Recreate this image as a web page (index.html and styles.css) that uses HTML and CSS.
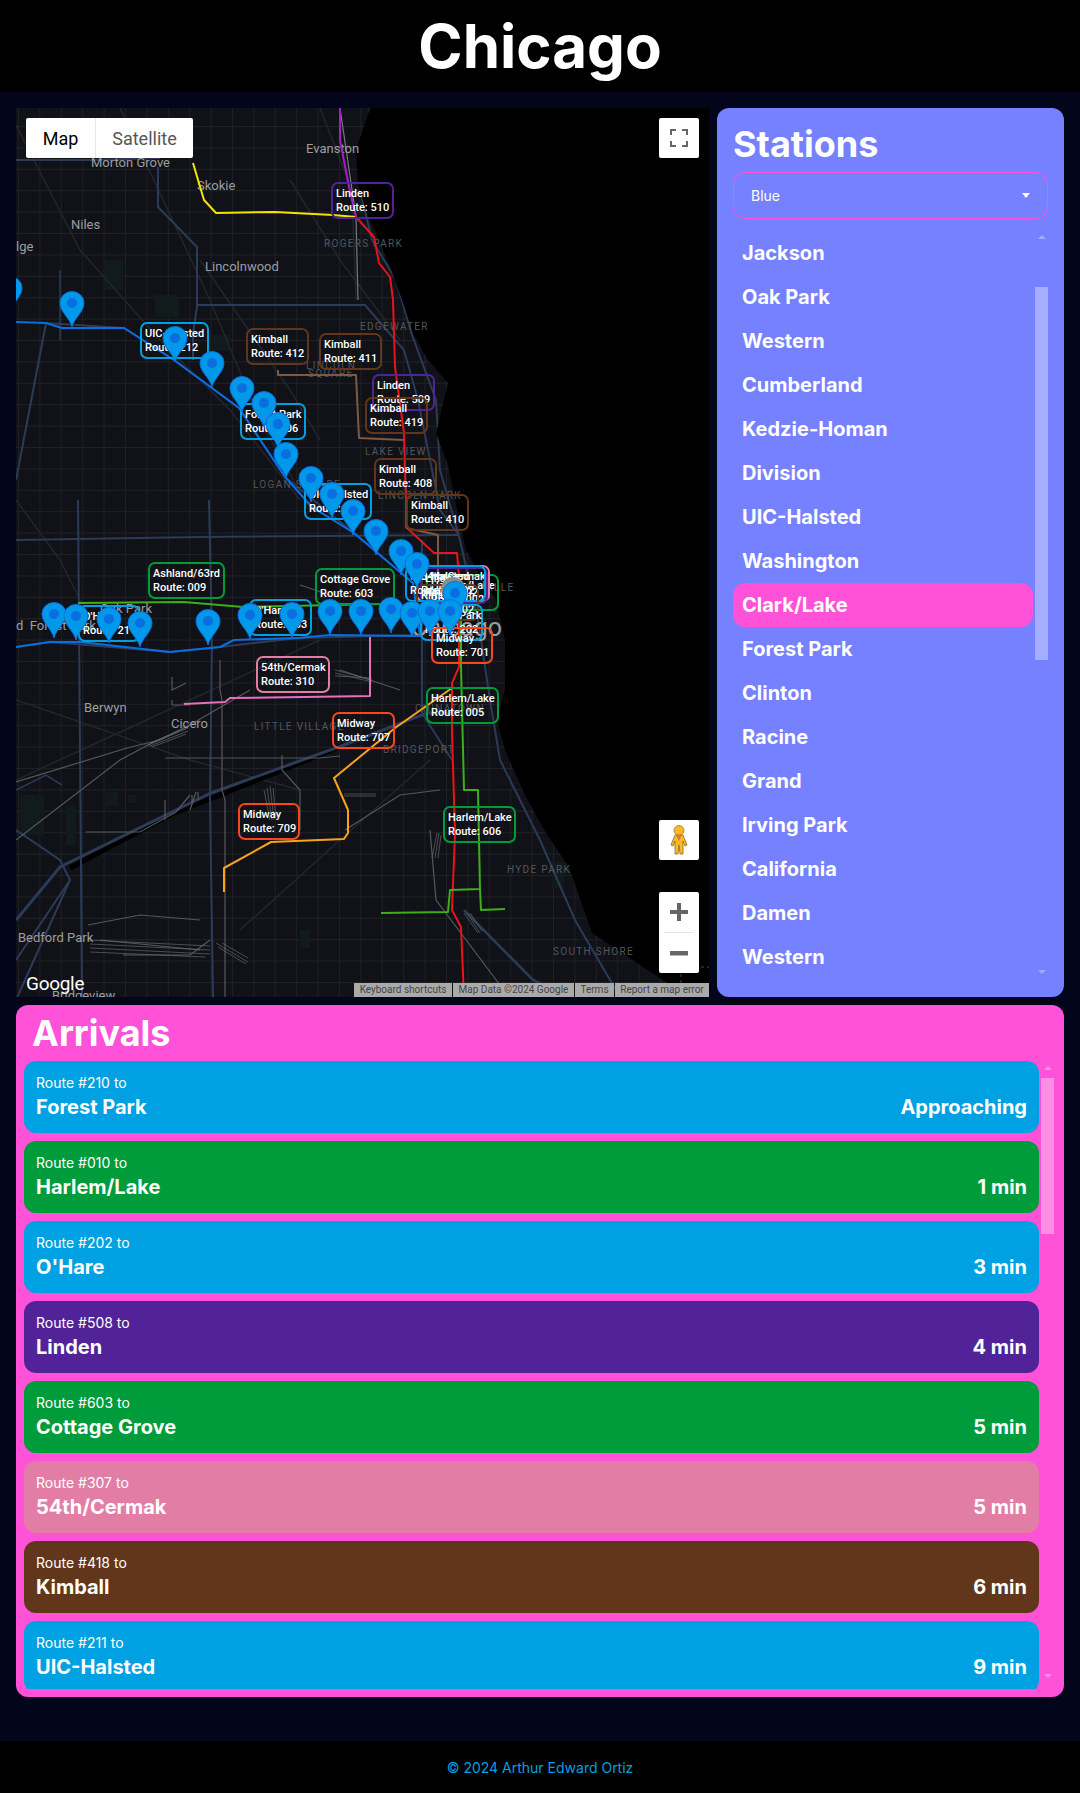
FILE: index.html
```html
<!DOCTYPE html>
<html lang="en">

<head>
    <meta charset="UTF-8">
    <meta name="viewport" content="width=device-width, initial-scale=1.0">
    <title>Chicago</title>
    <link rel="stylesheet" href="styles.css">
</head>

<body>
    <header class="site-header">
        <h1>Chicago</h1>
    </header>

    <main class="content">
        <section class="map">
            <!-- viewBox uses page coordinates so points can be read straight off the screen -->
            <svg class="map-canvas" viewBox="16 108 693 889" xmlns="http://www.w3.org/2000/svg">
                <defs>
                    <pattern id="streets" x="18" y="19" width="21.4" height="21.4" patternUnits="userSpaceOnUse">
                        <path d="M0 0V21.4M0 0H21.4" fill="none" stroke="#23262d" stroke-width="1.3" />
                    </pattern>
                    <clipPath id="landClip">
                        <path d="M16 108H370L356 150L358 185L367 213L379 240L390 267L402 300L413 333L428 360L448 383L436 433L448 465L455 500L459 520L466 550L480 575L496 600L505 640L505 690L497 720L505 750L525 795L546 833L569 867L592 933L643 967L689 997H16Z" />
                    </clipPath>
                    <g id="pin">
                        <path d="M0 0C-2 -9 -12 -15 -12 -24A12 11.5 0 0 1 12 -24C12 -15 2 -9 0 0Z" fill="#0098e8" stroke="#0a6ee0" stroke-width="1" />
                        <circle cx="0" cy="-24" r="5" fill="#0a6ee0" />
                    </g>
                </defs>

                <rect x="16" y="108" width="693" height="889" fill="#000" />
                <path d="M681 983V967H709" fill="none" stroke="#444" stroke-dasharray="3 3" />

                <g clip-path="url(#landClip)">
                    <rect x="16" y="108" width="693" height="889" fill="#101217" />
                    <rect x="16" y="108" width="693" height="889" fill="url(#streets)" />

                    <!-- parks -->
                    <g fill="#121b1b">
                        <rect x="66" y="805" width="10" height="40" />
                        <rect x="106" y="792" width="12" height="14" />
                        <rect x="128" y="795" width="8" height="8" />
                        <rect x="20" y="795" width="24" height="40" />
                        <rect x="105" y="260" width="18" height="30" />
                        <rect x="155" y="295" width="24" height="22" />
                        <rect x="208" y="335" width="22" height="16" />
                        <rect x="300" y="930" width="10" height="18" />
                        <rect x="552" y="862" width="12" height="26" />
                    </g>

                    <!-- diagonal streets -->
                    <g fill="none" stroke="#23262d" stroke-width="1.5">
                        <path d="M16 125L80 250L160 340L230 410L300 500" />
                        <path d="M120 108L210 300L260 420L310 510" />
                        <path d="M320 108L352 190L356 300" />
                        <path d="M16 700L190 760L300 790" />
                        <path d="M16 780L190 700L320 640" />
                        <path d="M240 930L340 840L430 760" />
                        <path d="M16 500L60 560L90 620" />
                        <path d="M290 180L340 260L400 340" />
                        <path d="M200 260L290 390L320 440" />
                    </g>

                    <!-- canal next to the Stevenson -->
                    <path d="M70 868L170 815L300 763L344 745" fill="none" stroke="#000" stroke-width="5" />

                    <!-- highways -->
                    <g fill="none" stroke="#2b3b58" stroke-width="2">
                        <path d="M16 160H92L160 158" />
                        <path d="M158 167V207L197 247V307L193 333V360" />
                        <path d="M197 305H365L404 350L418 400L430 460L440 510L459 535" />
                        <path d="M16 540L200 537L459 535" />
                        <path d="M78 500L82 997" />
                        <path d="M209 500L212 640L210 800L213 997" />
                        <path d="M16 647L50 642L170 652L220 647L298 638L422 635" />
                        <path d="M422 540V713L452 760" />
                        <path d="M16 920L60 867L211 793L344 745L427 713H459" stroke-width="3" />
                        <path d="M16 480L46 323L124 328L174 360L239 408L285 477L354 533L413 583" />
                        <path d="M464 910L533 980L570 997" stroke-width="2.5" />
                        <path d="M370 108L360 190L372 240L396 280L412 335L436 400L440 470L460 540L478 620L490 700L500 760L540 840L575 920L620 997" />
                        <path d="M16 830L60 860L70 880L16 960" />
                        <path d="M16 1000L70 880" />
                        <path d="M60 270V340" stroke-width="1.5" />
                        <path d="M16 790L46 775L62 785" stroke-width="1.5" />
                    </g>

                    <!-- rail yards and freight lines -->
                    <g fill="none" stroke="#55585c" stroke-width="1.2">
                        <path d="M16 782L127 748L160 740L195 722L250 690" />
                        <path d="M16 840L120 760L148 745L180 730" />
                        <path d="M165 758H320L340 756" />
                        <path d="M220 660V690L222 700V790L225 800V997" />
                        <path d="M340 108L356 217L358 300" stroke="#777a7e" />
                        <path d="M86 832H140L176 812L190 795" />
                        <path d="M165 800V820M196 792L190 810M192 795V805M198 792V800" />
                        <path d="M282 755V770L300 790V830" />
                        <path d="M172 677V690L186 683M172 700V705H190" />
                        <path d="M340 670L370 680L400 690" />
                        <path d="M88 925L140 915L200 920" />
                        <path d="M123 955H190L210 940" />
                        <path d="M345 830L400 795L440 790" />
                        <path d="M430 830L436 900L500 985" />
                        <path d="M100 940L200 950" />
                        <path d="M300 585L330 595" />
                    </g>

                    <!-- yards drawn as bundles of thin tracks -->
                    <g fill="none" stroke="#66696c" stroke-width=".7">
                        <path d="M148 745L188 728M150 746L188 731M152 747L186 734M150 743L186 728" />
                        <path d="M264 790L270 820M267 788L272 820M270 786L274 820M273 788L276 818" />
                        <path d="M88 940L210 946M90 944L210 950M90 948L210 954M90 952L205 957" />
                        <path d="M216 943L248 962M218 947L246 964M222 943L248 958" />
                        <path d="M432 858L437 833M435 858L439 833M438 858L441 835" />
                        <path d="M464 913L478 933M467 913L480 933M470 913L482 931" />
                        <path d="M335 670L372 680M335 673L372 682M335 676L372 678" />
                        <path d="M344 794H376M344 796H376" />
                    </g>
                </g>

                <!-- map labels -->
                <g class="map-place">
                    <text x="306" y="153">Evanston</text>
                    <text x="91" y="167">Morton Grove</text>
                    <text x="197" y="190">Skokie</text>
                    <text x="71" y="229">Niles</text>
                    <text x="205" y="271">Lincolnwood</text>
                    <text x="16" y="251">lge</text>
                    <text x="100" y="613">Oak Park</text>
                    <text x="16" y="630">d  Forest Park</text>
                    <text x="84" y="712">Berwyn</text>
                    <text x="171" y="728">Cicero</text>
                    <text x="18" y="942">Bedford Park</text>
                    <text x="52" y="1000">Bridgeview</text>
                </g>
                <g class="map-area">
                    <text x="324" y="247">ROGERS PARK</text>
                    <text x="360" y="330">EDGEWATER</text>
                    <text x="306" y="369">LINCOLN</text>
                    <text x="308" y="377">SQUARE</text>
                    <text x="365" y="455">LAKE VIEW</text>
                    <text x="253" y="488">LOGAN SQUARE</text>
                    <text x="378" y="499">LINCOLN PARK</text>
                    <text x="254" y="730">LITTLE VILLAGE</text>
                    <text x="383" y="753">BRIDGEPORT</text>
                    <text x="415" y="712">CHINATOWN</text>
                    <text x="507" y="873">HYDE PARK</text>
                    <text x="553" y="955">SOUTH SHORE</text>
                    <text x="490" y="591">ILLE</text>
                </g>
                <text class="map-city" x="411" y="636">Chicago</text>

                <!-- train lines -->
                <g fill="none" stroke-width="2" stroke-linejoin="round">
                    <path d="M193 163L204 200L216 213L275 212L333 215L356 217" stroke="#f4e400" />
                    <path d="M340 108V140L349 187L356 217" stroke="#a21fc4" />
                    <path d="M356 217L374 237L379 263L390 277L393 300L395 367L404 433L406 500L406 527L434 553L457 553L459 577V667L452 683L452 733L455 833L452 910L461 927L464 997" stroke="#e8141c" />
                    <path d="M278 370V375H356L359 438L404 440" stroke="#7d5a46" />
                    <path d="M406 528L438 535V580" stroke="#7d5a46" />
                    <path d="M184 704L225 702L230 698L370 696V637" stroke="#e66fc0" />
                    <path d="M224 892V868L271 842L344 839L348 833V810L334 778L395 728L452 688" stroke="#f9a21b" />
                    <path d="M381 913L448 912L450 890L480 889L478 790H464L461 667V600" stroke="#3fae1a" />
                    <path d="M480 889L481 910L505 909" stroke="#3fae1a" />
                    <path d="M78 603L184 602L243 607L381 604" stroke="#3fae1a" />
                    <path d="M16 322L46 323L62 328H124L174 360L239 408L285 477L312 507L354 533L413 583L420 636L330 635L298 638L234 640L220 647L170 652L80 642L50 642L16 647" stroke="#0a6ee0" />
                </g>

                <!-- route popups -->
                <g class="route-box">
                    <g class="line-purple" transform="translate(331 182)"><rect x="1" y="1" width="61" height="35" rx="6" /><text x="5" y="15">Linden</text><text x="5" y="29">Route: 510</text></g>
                    <g class="line-blue" transform="translate(140 322)"><rect x="1" y="1" width="67" height="35" rx="6" /><text x="5" y="15">UIC-Halsted</text><text x="5" y="29">Route: 212</text></g>
                    <g class="line-brown" transform="translate(246 328)"><rect x="1" y="1" width="61" height="35" rx="6" /><text x="5" y="15">Kimball</text><text x="5" y="29">Route: 412</text></g>
                    <g class="line-brown" transform="translate(319 333)"><rect x="1" y="1" width="61" height="35" rx="6" /><text x="5" y="15">Kimball</text><text x="5" y="29">Route: 411</text></g>
                    <g class="line-purple" transform="translate(372 374)"><rect x="1" y="1" width="61" height="35" rx="6" /><text x="5" y="15">Linden</text><text x="5" y="29">Route: 509</text></g>
                    <g class="line-brown" transform="translate(365 397)"><rect x="1" y="1" width="61" height="35" rx="6" /><text x="5" y="15">Kimball</text><text x="5" y="29">Route: 419</text></g>
                    <g class="line-blue" transform="translate(240 403)"><rect x="1" y="1" width="64" height="35" rx="6" /><text x="5" y="15">Forest Park</text><text x="5" y="29">Route: 206</text></g>
                    <g class="line-brown" transform="translate(374 458)"><rect x="1" y="1" width="61" height="35" rx="6" /><text x="5" y="15">Kimball</text><text x="5" y="29">Route: 408</text></g>
                    <g class="line-blue" transform="translate(304 483)"><rect x="1" y="1" width="66" height="35" rx="6" /><text x="5" y="15">UIC-Halsted</text><text x="5" y="29">Route: 208</text></g>
                    <g class="line-brown" transform="translate(406 494)"><rect x="1" y="1" width="61" height="35" rx="6" /><text x="5" y="15">Kimball</text><text x="5" y="29">Route: 410</text></g>
                    <g class="line-green" transform="translate(148 562)"><rect x="1" y="1" width="75" height="35" rx="6" /><text x="5" y="15">Ashland/63rd</text><text x="5" y="29">Route: 009</text></g>
                    <g class="line-green" transform="translate(315 568)"><rect x="1" y="1" width="78" height="35" rx="6" /><text x="5" y="15">Cottage Grove</text><text x="5" y="29">Route: 603</text></g>
                    <g class="line-blue" transform="translate(249 599)"><rect x="1" y="1" width="61" height="35" rx="6" /><text x="5" y="15">O'Hare</text><text x="5" y="29">Route: 203</text></g>
                    <g class="line-blue" transform="translate(78 605)"><rect x="1" y="1" width="60" height="35" rx="6" /><text x="5" y="15">O'Hare</text><text x="5" y="29">Route: 211</text></g>
                    <g class="line-pink" transform="translate(256 656)"><rect x="1" y="1" width="72" height="35" rx="6" /><text x="5" y="15">54th/Cermak</text><text x="5" y="29">Route: 310</text></g>

                    <!-- the pile up over the Loop -->
                    <g class="line-green" transform="translate(426 574)"><rect x="1" y="1" width="71" height="35" rx="6" /><text x="5" y="15">Harlem/Lake</text><text x="5" y="29">Route: 002</text></g>
                    <g class="line-pink" transform="translate(416 565)"><rect x="1" y="1" width="72" height="35" rx="6" /><text x="5" y="15">54th/Cermak</text><text x="5" y="29">Route: 302</text></g>
                    <g class="line-purple" transform="translate(420 567)"><rect x="1" y="1" width="66" height="35" rx="6" /><text x="5" y="15">Linden</text><text x="5" y="29">Route: 502</text></g>
                    <g class="line-blue" transform="translate(405 565)"><rect x="1" y="1" width="79" height="35" rx="6" /><text x="5" y="15">UIC-Halsted</text><text x="5" y="29">Route: 202</text></g>
                    <g class="line-brown" transform="translate(416 584)"><rect x="1" y="1" width="61" height="35" rx="6" /><text x="5" y="15">Kimball</text><text x="5" y="29">Route: 402</text></g>
                    <g class="line-blue" transform="translate(420 604)"><rect x="1" y="1" width="61" height="35" rx="6" /><text x="5" y="15">Forest Park</text><text x="5" y="29">Route: 202</text></g>

                    <g class="line-orange" transform="translate(431 627)"><rect x="1" y="1" width="60" height="35" rx="6" /><text x="5" y="15">Midway</text><text x="5" y="29">Route: 701</text></g>
                    <g class="line-green" transform="translate(426 687)"><rect x="1" y="1" width="71" height="35" rx="6" /><text x="5" y="15">Harlem/Lake</text><text x="5" y="29">Route: 005</text></g>
                    <g class="line-orange" transform="translate(332 712)"><rect x="1" y="1" width="61" height="35" rx="6" /><text x="5" y="15">Midway</text><text x="5" y="29">Route: 707</text></g>
                    <g class="line-orange" transform="translate(238 803)"><rect x="1" y="1" width="60" height="35" rx="6" /><text x="5" y="15">Midway</text><text x="5" y="29">Route: 709</text></g>
                    <g class="line-green" transform="translate(443 806)"><rect x="1" y="1" width="71" height="35" rx="6" /><text x="5" y="15">Harlem/Lake</text><text x="5" y="29">Route: 606</text></g>
                </g>

                <!-- current station -->
                <path d="M453 613C451 604 441 598 441 589A12 12 0 0 1 465 589C465 598 455 604 453 613Z" fill="#8c8c8c" />
                <circle cx="453" cy="589" r="5" fill="#fff" />

                <!-- station pins -->
                <use href="#pin" x="10" y="312" />
                <use href="#pin" x="72" y="327" />
                <use href="#pin" x="175" y="362" />
                <use href="#pin" x="212" y="387" />
                <use href="#pin" x="242" y="412" />
                <use href="#pin" x="264" y="427" />
                <use href="#pin" x="278" y="448" />
                <use href="#pin" x="286" y="478" />
                <use href="#pin" x="311" y="502" />
                <use href="#pin" x="332" y="518" />
                <use href="#pin" x="353" y="535" />
                <use href="#pin" x="376" y="555" />
                <use href="#pin" x="401" y="575" />
                <use href="#pin" x="417" y="588" />
                <use href="#pin" x="455" y="617" />
                <use href="#pin" x="54" y="638" />
                <use href="#pin" x="76" y="640" />
                <use href="#pin" x="109" y="643" />
                <use href="#pin" x="140" y="647" />
                <use href="#pin" x="208" y="645" />
                <use href="#pin" x="250" y="639" />
                <use href="#pin" x="292" y="638" />
                <use href="#pin" x="330" y="635" />
                <use href="#pin" x="361" y="635" />
                <use href="#pin" x="391" y="633" />
                <use href="#pin" x="412" y="637" />
                <use href="#pin" x="430" y="635" />
                <use href="#pin" x="450" y="635" />
            </svg>

            <div class="map-type">
                <span class="map-type-option map-type-active">Map</span>
                <span class="map-type-option map-type-sat">Satellite</span>
            </div>

            <button class="map-btn fullscreen-btn" aria-label="Fullscreen">
                <svg width="18" height="18" viewBox="0 0 18 18" fill="none" stroke="#666" stroke-width="2">
                    <path d="M1 6V1H6M12 1H17V6M17 12V17H12M6 17H1V12" />
                </svg>
            </button>

            <button class="map-btn pegman-btn" aria-label="Street View">
                <svg width="20" height="30" viewBox="0 0 20 30">
                    <circle cx="10" cy="5.5" r="5" fill="#fdb92e" stroke="#a87818" stroke-width=".8" />
                    <path d="M6 10H14L18 20L16 21L14 16V29H11L10 20L9 29H6V16L4 21L2 20Z" fill="#fdb92e" stroke="#8a6a20" stroke-width=".8" />
                    <path d="M7 10H13L10 16Z" fill="#e8762a" />
                </svg>
            </button>

            <div class="zoom-control">
                <button class="zoom-btn" aria-label="Zoom in">
                    <svg width="18" height="18" viewBox="0 0 18 18"><path d="M7 0H11V7H18V11H11V18H7V11H0V7H7Z" fill="#666" /></svg>
                </button>
                <div class="zoom-divider"></div>
                <button class="zoom-btn" aria-label="Zoom out">
                    <svg width="18" height="18" viewBox="0 0 18 18"><path d="M0 7H18V11.500H0Z" fill="#666" /></svg>
                </button>
            </div>

            <div class="google-logo">Google</div>

            <div class="attribution">
                <span class="attr-item attr-keys">Keyboard shortcuts</span>
                <span class="attr-item attr-data">Map Data ©2024 Google</span>
                <span class="attr-item attr-terms">Terms</span>
                <span class="attr-item attr-report">Report a map error</span>
            </div>
        </section>

        <aside class="stations">
            <h2>Stations</h2>
            <div class="line-select">
                <span>Blue</span>
                <span class="select-arrow"></span>
            </div>
            <div class="station-body">
                <ul class="station-list">
                    <li>Jackson</li>
                    <li>Oak Park</li>
                    <li>Western</li>
                    <li>Cumberland</li>
                    <li>Kedzie-Homan</li>
                    <li>Division</li>
                    <li>UIC-Halsted</li>
                    <li>Washington</li>
                    <li class="selected">Clark/Lake</li>
                    <li>Forest Park</li>
                    <li>Clinton</li>
                    <li>Racine</li>
                    <li>Grand</li>
                    <li>Irving Park</li>
                    <li>California</li>
                    <li>Damen</li>
                    <li>Western</li>
                </ul>
                <div class="scrollbar station-scroll">
                    <span class="arrow-up"></span>
                    <span class="thumb"></span>
                    <span class="arrow-down"></span>
                </div>
            </div>
        </aside>

        <section class="arrivals">
            <h2>Arrivals</h2>
            <div class="arrivals-body">
                <div class="arrival-list">
                    <div class="arrival bg-blue">
                        <div><p class="route">Route #210 to</p><p class="dest">Forest Park</p></div>
                        <p class="dest">Approaching</p>
                    </div>
                    <div class="arrival bg-green">
                        <div><p class="route">Route #010 to</p><p class="dest">Harlem/Lake</p></div>
                        <p class="dest">1 min</p>
                    </div>
                    <div class="arrival bg-blue">
                        <div><p class="route">Route #202 to</p><p class="dest">O'Hare</p></div>
                        <p class="dest">3 min</p>
                    </div>
                    <div class="arrival bg-purple">
                        <div><p class="route">Route #508 to</p><p class="dest">Linden</p></div>
                        <p class="dest">4 min</p>
                    </div>
                    <div class="arrival bg-green">
                        <div><p class="route">Route #603 to</p><p class="dest">Cottage Grove</p></div>
                        <p class="dest">5 min</p>
                    </div>
                    <div class="arrival bg-pink">
                        <div><p class="route">Route #307 to</p><p class="dest">54th/Cermak</p></div>
                        <p class="dest">5 min</p>
                    </div>
                    <div class="arrival bg-brown">
                        <div><p class="route">Route #418 to</p><p class="dest">Kimball</p></div>
                        <p class="dest">6 min</p>
                    </div>
                    <div class="arrival bg-blue">
                        <div><p class="route">Route #211 to</p><p class="dest">UIC-Halsted</p></div>
                        <p class="dest">9 min</p>
                    </div>
                </div>
                <div class="scrollbar arrival-scroll">
                    <span class="arrow-up"></span>
                    <span class="thumb"></span>
                    <span class="arrow-down"></span>
                </div>
            </div>
        </section>
    </main>

    <footer class="site-footer">
        <p>© 2024 Arthur Edward Ortiz</p>
    </footer>
</body>

</html>
```

FILE: styles.css
```css
* {
    box-sizing: border-box;
}

body {
    background-color: #03051a;
    color: #fff;
    font-family: Inter, "Noto Sans", sans-serif;
    margin: 0;
    padding: 0;
}

h1, h2, p, ul {
    margin: 0;
    padding: 0;
}

.site-header {
    background-color: #000;
    height: 92px;
    text-align: center;
}

.site-header h1 {
    font-size: 60px;
    font-weight: 700;
    line-height: 92px;
}

.content {
    display: grid;
    grid-template-columns: 693px 347px;
    grid-template-rows: 889px 692px;
    gap: 8px;
    padding: 16px 16px 44px;
}

/* Map */
.map {
    background-color: #000;
    overflow: hidden;
    position: relative;
}

.map-canvas {
    display: block;
    height: 889px;
    width: 693px;
}

.map-place text {
    fill: #9c9ea1;
    font-family: Roboto, sans-serif;
    font-size: 13px;
    white-space: pre;
}

.map-area text {
    fill: #54575c;
    font-family: Roboto, sans-serif;
    font-size: 10px;
    letter-spacing: 1.3px;
}

.map-city {
    fill: #9c9ea1;
    font-family: Roboto, sans-serif;
    font-size: 25px;
}

.route-box rect {
    fill: none;
    stroke-width: 2;
}

.route-box text {
    fill: #fff;
    font-family: Roboto, sans-serif;
    font-size: 11px;
    font-weight: 500;
}

.line-purple rect { stroke: #522398; }
.line-blue rect { stroke: #00a1de; }
.line-brown rect { stroke: #62361b; }
.line-green rect { stroke: #009b3a; }
.line-pink rect { stroke: #e27ea6; }
.line-orange rect { stroke: #f9461c; }

.map-type {
    background-color: #fff;
    border-radius: 2px;
    display: flex;
    font-family: Roboto, sans-serif;
    font-size: 18px;
    height: 40px;
    left: 10px;
    position: absolute;
    top: 10px;
}

.map-type-option {
    align-items: center;
    color: #565656;
    display: flex;
    justify-content: center;
}

.map-type-active {
    border-right: 1px solid #e6e6e6;
    color: #000;
    width: 70px;
}

.map-type-sat {
    width: 97px;
}

.map-btn {
    align-items: center;
    background-color: #fff;
    border: none;
    border-radius: 2px;
    display: flex;
    height: 40px;
    justify-content: center;
    padding: 0;
    position: absolute;
    right: 10px;
    width: 40px;
}

.fullscreen-btn {
    top: 10px;
}

.pegman-btn {
    top: 712px;
}

.zoom-control {
    background-color: #fff;
    border-radius: 2px;
    position: absolute;
    right: 10px;
    top: 784px;
    width: 40px;
}

.zoom-btn {
    align-items: center;
    background: none;
    border: none;
    display: flex;
    height: 40px;
    justify-content: center;
    padding: 0;
    width: 40px;
}

.zoom-divider {
    background-color: #e6e6e6;
    height: 1px;
    margin: 0 5px;
}

.google-logo {
    bottom: 2px;
    color: #fff;
    font-family: Roboto, sans-serif;
    font-size: 19px;
    left: 10px;
    letter-spacing: -.3px;
    position: absolute;
}

.attribution {
    bottom: 0;
    color: #444;
    display: flex;
    font-family: Roboto, sans-serif;
    font-size: 10px;
    gap: 1px;
    height: 14px;
    line-height: 14px;
    position: absolute;
    right: 0;
}

.attr-item {
    background-color: #aaa;
    padding: 0 4px;
    text-align: center;
    white-space: nowrap;
}

.attr-keys { width: 98px; }
.attr-data { width: 121px; }
.attr-terms { width: 39px; }
.attr-report { width: 94px; }

/* Stations */
.stations {
    background-color: #7681ff;
    border-radius: 12px;
    display: flex;
    flex-direction: column;
    padding: 12px 16px 0;
}

.stations h2 {
    font-size: 36px;
    font-weight: 700;
    line-height: 48px;
    margin-bottom: 4px;
}

.line-select {
    align-items: center;
    border: 1px solid #ff52d9;
    border-radius: 12px;
    display: flex;
    font-size: 14px;
    height: 47px;
    justify-content: space-between;
    padding: 0 17px;
}

.select-arrow {
    border-left: 4px solid transparent;
    border-right: 4px solid transparent;
    border-top: 5px solid #fff;
}

.station-body {
    display: flex;
    margin-top: 12px;
}

.station-list {
    flex: 1;
    list-style: none;
}

.station-list li {
    border-radius: 12px;
    font-size: 20px;
    font-weight: 700;
    height: 44px;
    line-height: 44px;
    padding-left: 9px;
}

.station-list li.selected {
    background-color: #ff52d9;
}

.scrollbar {
    align-items: center;
    display: flex;
    flex-direction: column;
    flex-shrink: 0;
    width: 13px;
}

.arrow-up {
    border-bottom: 4px solid rgba(255, 255, 255, .35);
    border-left: 4px solid transparent;
    border-right: 4px solid transparent;
    margin-top: 4px;
}

.arrow-down {
    border-left: 4px solid transparent;
    border-right: 4px solid transparent;
    border-top: 4px solid rgba(255, 255, 255, .35);
}

.thumb {
    background-color: rgba(255, 255, 255, .35);
    width: 13px;
}

.station-scroll {
    margin-left: 2px;
}

.station-scroll .thumb {
    height: 373px;
    margin: 48px 0 310px;
}

/* Arrivals */
.arrivals {
    background-color: #ff52d9;
    border-radius: 12px;
    grid-column: 1 / 3;
    padding: 0 10px 8px 8px;
}

.arrivals h2 {
    font-size: 36px;
    font-weight: 700;
    line-height: 56px;
    padding-left: 8px;
}

.arrivals-body {
    display: flex;
    gap: 2px;
    height: 628px;
}

.arrival-list {
    flex: 1;
    overflow: hidden;
}

.arrival {
    align-items: flex-end;
    border-radius: 12px;
    display: flex;
    height: 72px;
    justify-content: space-between;
    margin-bottom: 8px;
    padding: 12px;
}

.route {
    font-size: 14px;
    line-height: 20px;
}

.dest {
    font-size: 20px;
    font-weight: 700;
    line-height: 28px;
}

.bg-blue { background-color: #00a1e2; }
.bg-green { background-color: #009b3a; }
.bg-purple { background-color: #522398; }
.bg-pink { background-color: #e27ea6; }
.bg-brown { background-color: #62361b; }

.arrival-scroll .arrow-up {
    margin-top: 5px;
}

.arrival-scroll .thumb {
    height: 156px;
    margin: 8px 0 440px;
}

.site-footer {
    align-items: center;
    background-color: #000;
    color: #00a1e2;
    display: flex;
    font-size: 14px;
    height: 52px;
    justify-content: center;
}
```
